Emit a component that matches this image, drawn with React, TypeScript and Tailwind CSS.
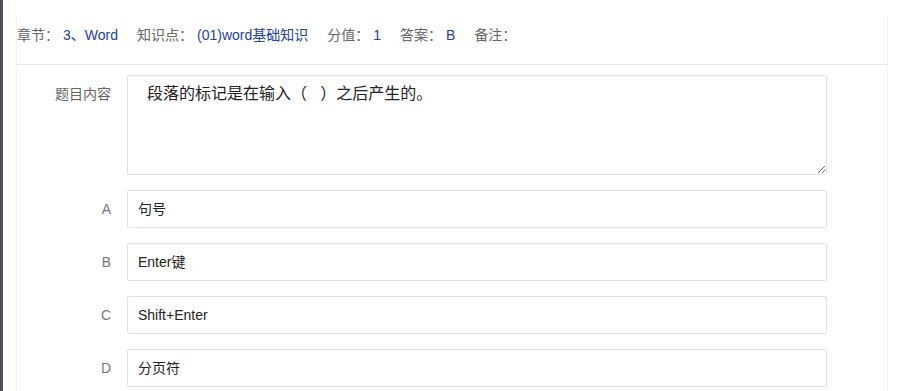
import React from "react";

interface Option {
  key: string;
  text: string;
}

const options: Option[] = [
  { key: "A", text: "句号" },
  { key: "B", text: "Enter键" },
  { key: "C", text: "Shift+Enter" },
  { key: "D", text: "分页符" },
];

const meta = [
  { label: "章节：", value: "3、Word" },
  { label: "知识点：", value: "(01)word基础知识" },
  { label: "分值：", value: "1" },
  { label: "答案：", value: "B" },
  { label: "备注：", value: "" },
];

const font = { fontFamily: '"Liberation Sans", "Noto Sans CJK SC", sans-serif' };

export default function App() {
  return (
    <div className="flex min-h-screen bg-white" style={font}>
      <div className="w-[3px] shrink-0 bg-[#4b4f57]" />
      <div className="flex-1 pl-[13px] pr-[11px] pt-[15px]">
        <div className="min-h-[376px] border-x border-[#f3f3f3]">
          {/* meta info line */}
          <div className="flex h-[50px] items-start gap-[19px] border-b border-[#e6e6e6] pt-[12px] text-[14px] leading-4">
            {meta.map((m) => (
              <div key={m.label} className="flex gap-[4px]">
                <span className="text-[#666]">{m.label}</span>
                {m.value && <span className="text-[#2341a8]">{m.value}</span>}
              </div>
            ))}
          </div>

          <div className="flex flex-col gap-[15px] pt-[10px]">
            <div className="flex items-start">
              <div className="w-[94px] shrink-0 pt-[11px] text-right text-[14px] leading-4 text-[#666]">
                题目内容
              </div>
              <textarea
                readOnly
                defaultValue={"段落的标记是在输入（   ）之后产生的。"}
                className="ml-[16px] h-[100px] w-[700px] rounded-[2px] border border-[#e2e2e2] pl-[19px] pt-[6px] text-[16px] leading-6 text-[#222] outline-none"
                style={font}
              />
            </div>

            {options.map((o) => (
              <div key={o.key} className="flex items-center">
                <div className="w-[94px] shrink-0 text-right text-[14px] text-[#777]">
                  {o.key}
                </div>
                <div className="ml-[16px] flex h-[38px] w-[700px] items-center rounded-[2px] border border-[#e2e2e2] pl-[10px] text-[14px] text-[#222]">
                  {o.text}
                </div>
              </div>
            ))}
          </div>
        </div>
      </div>
    </div>
  );
}
